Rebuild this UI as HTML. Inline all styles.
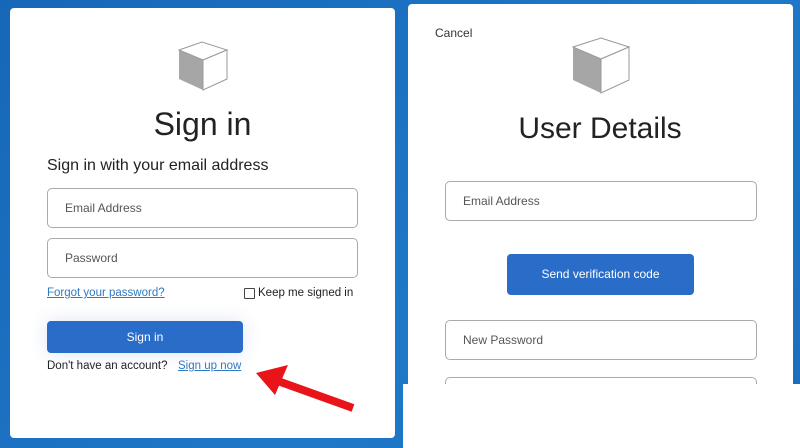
<!DOCTYPE html>
<html><head><style>
body{margin:0;width:800px;height:448px;overflow:hidden;background:linear-gradient(135deg,#1767b8,#1f78c8 60%,#1a6dbd);font-family:"Liberation Sans",sans-serif;position:relative;color:#222}
.card{position:absolute;background:#fff;border-radius:4px}
.inp{position:absolute;border:1px solid #aaa;border-radius:5px;box-sizing:border-box;height:40px;font-size:12px;color:#555;padding-left:17px;line-height:38px;background:#fff}
.btn{position:absolute;background:#2a6dc9;border-radius:4px;color:#fff;font-size:12px;text-align:center}
.t{position:absolute;white-space:nowrap}
a{color:#2f7ac2;text-decoration:underline}
</style></head><body>
<div class="card" style="left:10px;top:8px;width:385px;height:430px"></div>
<div class="card" style="left:408px;top:4px;width:385px;height:440px"></div>
<div style="position:absolute;left:403px;top:384px;width:397px;height:64px;background:#fff"></div>

<svg style="position:absolute;left:177px;top:41px" width="52" height="51" viewBox="0 0 52 51"><polygon points="2,9 26,19 26,49 2,38" fill="#a6a6a6"/><polygon points="2,9 25,1 50,9 26,19" fill="#fff" stroke="#999" stroke-width="1"/><polygon points="26,19 50,9 50,38 26,49" fill="#fff" stroke="#999" stroke-width="1"/></svg>
<div class="t" style="left:0;width:405px;text-align:center;top:106px;font-size:32px">Sign in</div>
<div class="t" style="left:47px;top:157px;font-size:16px">Sign in with your email address</div>
<div class="inp" style="left:47px;top:188px;width:311px">Email Address</div>
<div class="inp" style="left:47px;top:238px;width:311px">Password</div>
<div class="t" style="left:47px;top:287px;font-size:11.5px"><a>Forgot your password?</a></div>
<div style="position:absolute;left:244px;top:288px;width:9px;height:9px;border:1px solid #444;border-radius:1px"></div>
<div class="t" style="left:258px;top:287px;font-size:11.5px">Keep me signed in</div>
<div class="btn" style="left:47px;top:321px;width:196px;height:32px;line-height:32px;box-shadow:0 0 18px rgba(40,80,200,.15)">Sign in</div>
<div class="t" style="left:47px;top:360px;font-size:11.5px">Don't have an account?</div>
<div class="t" style="left:178px;top:360px;font-size:11.5px"><a>Sign up now</a></div>
<svg style="position:absolute;left:250px;top:365px" width="110" height="50"><line x1="103" y1="43" x2="25" y2="15" stroke="#e8141a" stroke-width="8"/><polygon points="6,8 38,0 25,30" fill="#e8141a"/></svg>

<div class="t" style="left:435px;top:26px;font-size:12px;color:#333">Cancel</div>
<svg style="position:absolute;left:571px;top:37px" width="60" height="58" viewBox="0 0 60 58"><polygon points="2,10 30,22 30,56 2,43" fill="#a6a6a6"/><polygon points="2,10 30,1 58,10 30,22" fill="#fff" stroke="#999"/><polygon points="30,22 58,10 58,43 30,56" fill="#fff" stroke="#999"/></svg>
<div class="t" style="left:400px;width:400px;text-align:center;top:112px;font-size:30px">User Details</div>
<div class="inp" style="left:445px;top:181px;width:312px">Email Address</div>
<div class="btn" style="left:507px;top:254px;width:187px;height:41px;line-height:41px">Send verification code</div>
<div class="inp" style="left:445px;top:320px;width:312px">New Password</div>
<div class="inp" style="left:445px;top:377px;width:312px;height:7px;border-bottom:none;border-radius:5px 5px 0 0"></div>
</body></html>
